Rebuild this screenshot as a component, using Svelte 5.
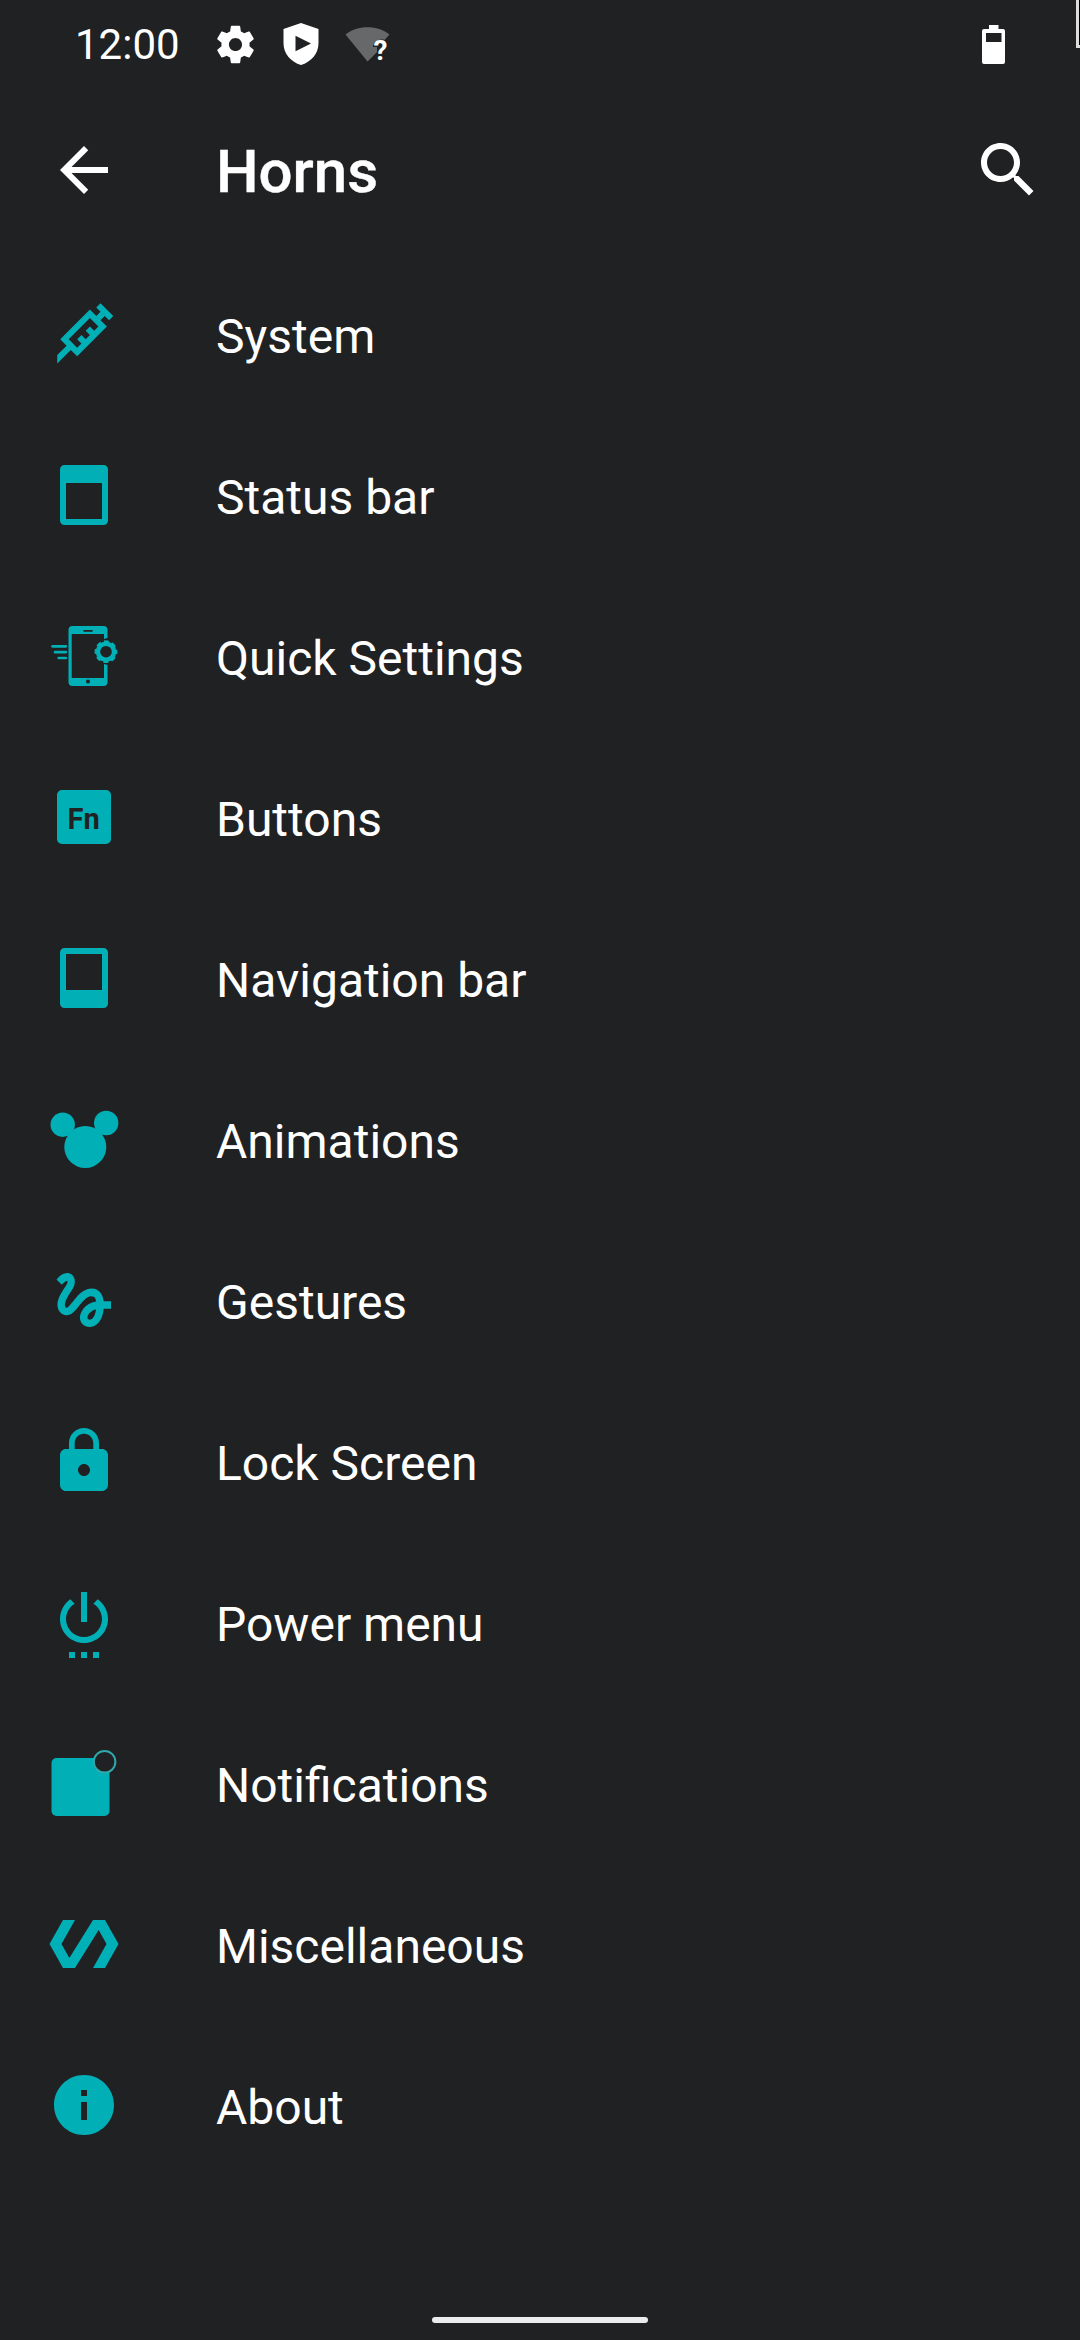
<script>
  const items = [
    { id: 'system', label: 'System' },
    { id: 'status', label: 'Status bar' },
    { id: 'quick', label: 'Quick Settings' },
    { id: 'buttons', label: 'Buttons' },
    { id: 'nav', label: 'Navigation bar' },
    { id: 'anim', label: 'Animations' },
    { id: 'gesture', label: 'Gestures' },
    { id: 'lock', label: 'Lock Screen' },
    { id: 'power', label: 'Power menu' },
    { id: 'notif', label: 'Notifications' },
    { id: 'misc', label: 'Miscellaneous' },
    { id: 'about', label: 'About' }
  ];

  // Icons drawn as a single path on the 24-unit grid
  const paths = {
    system: 'M11.15,15.18L9.73,13.77L11.15,12.35L12.56,13.77L13.97,12.35L12.56,10.94L13.97,9.53L15.39,10.94L16.8,9.53L13.97,6.7L6.9,13.77L9.73,16.6L11.15,15.18M3.08,19L6.2,15.89L4.08,13.77L13.97,3.87L16.1,6L17.5,4.58L16.1,3.16L17.5,1.75L21.75,6L20.34,7.4L18.92,6L17.5,7.4L19.63,9.53L9.73,19.42L7.61,17.3L3.08,21.84V19Z',
    status: 'M5.5 2h13A1.5 1.5 0 0 1 20 3.5v17a1.5 1.5 0 0 1-1.5 1.5h-13A1.5 1.5 0 0 1 4 20.5v-17A1.5 1.5 0 0 1 5.5 2zM6 8v12h12V8z',
    nav: 'M5.5 2h13A1.5 1.5 0 0 1 20 3.5v17a1.5 1.5 0 0 1-1.5 1.5h-13A1.5 1.5 0 0 1 4 20.5v-17A1.5 1.5 0 0 1 5.5 2zM6 4v12h12V4z',
    gesture: 'M4.59 6.89c.7-.71 1.4-1.35 1.71-1.22.5.2 0 1.03-.3 1.52-.25.42-2.86 3.89-2.86 6.31 0 1.28.48 2.34 1.34 2.98.75.56 1.74.73 2.64.46 1.07-.31 1.95-1.4 3.06-2.77 1.21-1.49 2.83-3.44 4.08-3.44 1.63 0 1.65 1.01 1.76 1.79-3.78.64-5.38 3.67-5.38 5.37 0 1.7 1.44 3.09 3.21 3.09 1.63 0 4.29-1.33 4.69-6.1H21v-2.5h-2.47c-.15-1.65-1.09-4.2-4.03-4.2-2.25 0-4.18 1.91-4.94 2.84-.58.73-2.06 2.48-2.29 2.72-.25.3-.68.84-1.11.84-.45 0-.72-.83-.36-1.92.35-1.09 1.4-2.86 1.85-3.52.78-1.14 1.3-1.92 1.3-3.28C8.95 3.69 7.31 3 6.44 3 5.12 3 3.97 4 3.72 4.25c-.36.36-.66.66-.88.93l1.75 1.71zm9.29 11.66c-.31 0-.74-.26-.74-.72 0-.6.73-2.2 2.87-2.76-.3 2.69-1.43 3.48-2.13 3.48z',
    lock: 'M18 8h-1V6c0-2.76-2.24-5-5-5S7 3.24 7 6v2H6c-1.1 0-2 .9-2 2v10c0 1.1.9 2 2 2h12c1.1 0 2-.9 2-2V10c0-1.1-.9-2-2-2zm-6 9c-1.1 0-2-.9-2-2s.9-2 2-2 2 .9 2 2-.9 2-2 2zm3.1-9H8.9V6c0-1.71 1.39-3.1 3.1-3.1 1.71 0 3.1 1.39 3.1 3.1v2z',
    power: 'M7 24h2v-2H7v2zm4 0h2v-2h-2v2zm2-22h-2v10h2V2zm3.56 2.44l-1.45 1.45C16.84 6.94 18 8.83 18 11c0 3.31-2.69 6-6 6s-6-2.69-6-6c0-2.17 1.16-4.06 2.88-5.12L7.44 4.44C5.36 5.88 4 8.28 4 11c0 4.42 3.58 8 8 8s8-3.58 8-8c0-2.72-1.36-5.12-3.44-6.56zM15 24h2v-2h-2v2z',
    misc: 'M19 4h-4L7.11 16.63 4.5 12 9 4H5L.5 12 5 20h4l7.89-12.63L19.5 12 15 20h4l4.5-8z',
    about: 'M12 2C6.48 2 2 6.48 2 12s4.48 10 10 10 10-4.48 10-10S17.52 2 12 2zm1 15h-2v-6h2v6zm0-8h-2V7h2v2z'
  };
</script>

<div class="screen">
  <div class="statusbar">
    <span class="time">12:00</span>
    <svg class="gear" viewBox="0 0 24 24"><path d="M19.43 12.98c.04-.32.07-.64.07-.98s-.03-.66-.07-.98l2.11-1.65c.19-.15.24-.42.12-.64l-2-3.46c-.12-.22-.39-.3-.61-.22l-2.49 1c-.52-.4-1.08-.73-1.69-.98l-.38-2.65C14.46 2.18 14.25 2 14 2h-4c-.25 0-.46.18-.49.42l-.38 2.65c-.61.25-1.17.59-1.69.98l-2.49-1c-.23-.09-.49 0-.61.22l-2 3.46c-.13.22-.07.49.12.64l2.11 1.65c-.04.32-.07.65-.07.98s.03.66.07.98l-2.11 1.65c-.19.15-.24.42-.12.64l2 3.46c.12.22.39.3.61.22l2.49-1c.52.4 1.08.73 1.69.98l.38 2.65c.03.24.24.42.49.42h4c.25 0 .46-.18.49-.42l.38-2.65c.61-.25 1.17-.59 1.69-.98l2.49 1c.23.09.49 0 .61-.22l2-3.46c.12-.22.07-.49-.12-.64l-2.11-1.65zM12 15.5c-1.93 0-3.5-1.57-3.5-3.5s1.57-3.5 3.5-3.5 3.5 1.57 3.5 3.5-1.57 3.5-3.5 3.5z" /></svg>
    <svg class="shield" viewBox="0 0 36 42"><path fill-rule="evenodd" d="M18 0L35.5 6V20C35.5 31 28 39 18 42C8 39 .5 31 .5 20V6zM12.5 12.7V28.3L28 20.5z" /></svg>
    <svg class="wifi" viewBox="0 0 46 38">
      <path class="dim" d="M.5 7.5C7 2.5 14 .3 22.5 .3S38 2.5 44.5 7.5L39.5 13C34 11.5 28.5 14.5 28 20H32V25L22.5 34.5z" />
      <text x="28.5" y="33" class="q">?</text>
    </svg>
    <svg class="battery" viewBox="0 0 23 39"><path fill-rule="evenodd" d="M7 0H16.5V4H21A2 2 0 0 1 23 6V37A2 2 0 0 1 21 39H2A2 2 0 0 1 0 37V6A2 2 0 0 1 2 4H7zM4 8V17H19.5V8z" /></svg>
    <div class="corner"></div>
  </div>

  <header class="appbar">
    <svg class="icon white" viewBox="0 0 24 24"><path d="M20 11H7.83l5.59-5.59L12 4l-8 8 8 8 1.41-1.41L7.83 13H20v-2z" /></svg>
    <h1>Horns</h1>
    <svg class="icon white" viewBox="0 0 24 24"><path d="M15.5 14h-.79l-.28-.27C15.41 12.59 16 11.11 16 9.5 16 5.91 13.09 3 9.5 3S3 5.91 3 9.5 5.91 16 9.5 16c1.61 0 3.09-.59 4.23-1.57l.27.28v.79l5 4.99L20.49 19l-4.99-5zm-6 0C7.01 14 5 11.99 5 9.5S7.01 5 9.5 5 14 7.01 14 9.5 11.99 14 9.5 14z" /></svg>
  </header>

  <main class="list">
    {#each items as item (item.id)}
      <div class="row">
        {#if paths[item.id]}
          <svg class="icon" viewBox="0 0 24 24"><path fill-rule="evenodd" d={paths[item.id]} /></svg>
        {:else}
          <svg class="icon" viewBox="0 0 72 72">
            {#if item.id === 'quick'}
              <path fill-rule="evenodd" d="M24.5 6H55.5A4 4 0 0 1 59.500 10V18L56 19V14H23.700V58H56V44L59.500 45V62A4 4 0 0 1 55.500 66H24.500A4 4 0 0 1 20.500 62V10A4 4 0 0 1 24.500 6z" />
              <path class="line" d="M4.5 26.3H17.8M7 32.2H17.8M10.7 38H17.8" />
              <path class="cut" d="M36 10.8H44" />
              <circle class="hole" cx="40" cy="61.5" r="2" />
              <circle class="ring" cx="58" cy="31.7" r="8" />
              <circle class="teeth" cx="58" cy="31.7" r="10.1" />
            {:else if item.id === 'buttons'}
              <rect x="9" y="9" width="54" height="54" rx="5" />
              <text class="fn" x="19.5" y="48">Fn</text>
            {:else if item.id === 'anim'}
              <circle cx="37.3" cy="44" r="21" />
              <circle cx="14.7" cy="21.7" r="12.2" />
              <circle cx="58.2" cy="20" r="12.2" />
            {:else if item.id === 'notif'}
              <rect x="3.5" y="11" width="58" height="58" rx="5" />
              <circle class="badge" cx="56.6" cy="14.8" r="10.8" />
            {/if}
          </svg>
        {/if}
        <span class="label">{item.label}</span>
      </div>
    {/each}
  </main>

  <footer class="navbar"><div class="pill"></div></footer>
</div>

<style>
  :global(body) {
    background: #202124;
  }
  .screen {
    width: 1080px;
    height: 2340px;
    background: #202123;
    color: #fff;
    font-family: Roboto, sans-serif;
    display: flex;
    flex-direction: column;
    overflow: hidden;
    position: relative;
  }
  svg {
    display: block;
    flex: none;
    fill: #fff;
    overflow: visible;
  }
  .statusbar {
    height: 88px;
    box-sizing: border-box;
    padding: 0 75px;
    display: flex;
    align-items: center;
  }
  .time {
    font-size: 42px;
    line-height: 50px;
    width: 138px;
    padding-top: 2px;
  }
  .gear {
    width: 45px;
    height: 45px;
  }
  .shield {
    width: 36px;
    height: 42px;
    margin-left: 25px;
  }
  .wifi {
    width: 46px;
    height: 38px;
    margin-left: 26px;
    margin-top: 4px;
  }
  .dim {
    fill: #67686a;
  }
  .q {
    font: 700 28px Roboto, sans-serif;
  }
  .battery {
    width: 23px;
    height: 39px;
    margin-left: auto;
  }
  .corner {
    position: absolute;
    right: 0;
    top: 0;
    width: 1px;
    height: 45px;
    background: #000;
    border: solid #ddd;
    border-width: 0 0 3px 3px;
  }
  .appbar {
    height: 166px;
    box-sizing: border-box;
    padding: 0 36px 0 48px;
    display: flex;
    align-items: center;
  }
  .appbar .icon {
    margin-bottom: 2px;
  }
  h1 {
    margin: 0 auto 0 96px;
    font-size: 60px;
    line-height: 70px;
    font-weight: 500;
    -webkit-text-stroke: 0.4px #fff;
    padding-top: 2px;
  }
  .icon {
    width: 72px;
    height: 72px;
    fill: #00b0b6;
  }
  .white {
    fill: #fff;
  }
  .row {
    height: 161px;
    box-sizing: border-box;
    padding-left: 48px;
    display: flex;
    align-items: center;
  }
  .row .icon {
    margin-bottom: 1px;
  }
  .label {
    margin-left: 96px;
    padding-top: 4px;
    font-size: 48px;
    line-height: 56px;
    white-space: nowrap;
  }
  .line {
    fill: none;
    stroke: #00b0b6;
    stroke-width: 2.7;
    stroke-linecap: round;
  }
  .cut {
    fill: none;
    stroke: #202123;
    stroke-width: 1.7;
    stroke-linecap: round;
  }
  .hole {
    fill: #202123;
  }
  .ring {
    fill: #202123;
    stroke: #00b0b6;
    stroke-width: 4.4;
  }
  .teeth {
    fill: none;
    stroke: #00b0b6;
    stroke-width: 2.6;
    stroke-dasharray: 4.8 3.132;
    stroke-dashoffset: 2.4;
  }
  .fn {
    font: 700 29px Roboto, sans-serif;
    fill: #202123;
  }
  .badge {
    fill: #202123;
    stroke: #2fa9ac;
    stroke-width: 2;
  }
  .navbar {
    margin-top: auto;
    padding-bottom: 17px;
    display: flex;
    justify-content: center;
  }
  .pill {
    width: 216px;
    height: 6px;
    border-radius: 3px;
    background: #ebeced;
  }
</style>
